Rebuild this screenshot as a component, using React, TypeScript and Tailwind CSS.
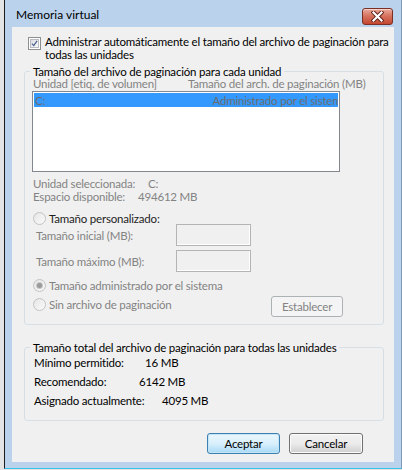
import React from 'react'

const grayText = 'text-[#838383]'

function CloseButton() {
  return (
    <div className="mt-[8px] w-[31px] h-[17px] rounded-[3px] border border-[#7c2f24] bg-gradient-to-b from-[#e9a99a] via-[#d46f5b] to-[#c4452f] flex items-center justify-center shadow-[inset_0_1px_0_rgba(255,255,255,0.5)]">
      <svg width="13" height="11" viewBox="0 0 13 11">
        <path d="M2.5 1.5 L10.5 9.5 M10.5 1.5 L2.5 9.5" stroke="#5a1d14" strokeWidth="4" strokeLinecap="square" />
        <path d="M2.5 1.5 L10.5 9.5 M10.5 1.5 L2.5 9.5" stroke="#ffffff" strokeWidth="2.2" strokeLinecap="square" />
      </svg>
    </div>
  )
}

function Checkbox() {
  return (
    <div className="w-[13px] h-[13px] shrink-0 border border-[#8e8f8f] bg-white p-[1px]">
      <div className="w-full h-full border border-[#b8bcc2] bg-gradient-to-br from-[#dcdde0] to-[#fbfbfb] flex items-center justify-center">
        <svg width="9" height="9" viewBox="0 0 9 9">
          <path d="M1.2 4.6 L3.6 7.2 L7.8 1.2" stroke="#4a5f8e" strokeWidth="1.6" fill="none" />
        </svg>
      </div>
    </div>
  )
}

function Radio({ checked = false }: { checked?: boolean }) {
  return (
    <div className="w-[13px] h-[13px] shrink-0 rounded-full border border-[#c3c3c3] bg-gradient-to-br from-[#e6e6e6] to-[#fafafa] flex items-center justify-center">
      {checked && <div className="w-[5px] h-[5px] rounded-full bg-[#9a9a9a] shadow-[0_0_0_1px_#c8c8c8]" />}
    </div>
  )
}

function DisabledInput() {
  return <div className="w-[75px] h-[22px] shrink-0 border border-[#b4b4b4] bg-[#f0f0f0] shadow-[inset_-1px_-1px_0_#ffffff]" />
}

export default function App() {
  return (
    <div className="w-[402px] h-[470px] bg-[#e4e4e4] flex overflow-hidden font-['Lato','Liberation_Sans',sans-serif] text-[11.5px] tracking-[-0.2px] leading-[13px] text-black">
      <div className="w-[4px] shrink-0" />
      {/* window */}
      <div className="w-[398px] h-[469px] flex flex-col bg-[#bad2ec] border-l border-r border-b border-l-[#1c1c1c] border-r-[#7d99b8] border-b-[#35c3e6]">
        {/* title bar */}
        <div className="h-[27px] shrink-0 flex justify-between pl-[11px] pr-[8px]">
          <span className="pt-[8px] text-[12px] tracking-[0px]">Memoria virtual</span>
          <CloseButton />
        </div>

        {/* client area */}
        <div className="mx-[7px] h-[435px] bg-[#f0f0f0] flex flex-col">
          <div className="mt-[10px] ml-[16px] flex gap-[4px] items-start">
            <Checkbox />
            <span className="-mt-[2px] whitespace-nowrap">
              Administrar automáticamente el tamaño del archivo de paginación para
              <br />
              todas las unidades
            </span>
          </div>

          {/* per drive */}
          <fieldset className="mt-[4px] ml-[12px] w-[360px] h-[260px] border border-[#d5dfe5] rounded-[3px] flex flex-col">
            <legend className="ml-[5px] px-[3px] leading-[13px]">Tamaño del archivo de paginación para cada unidad</legend>
            <div className={`-mt-[1px] pl-[8px] flex whitespace-nowrap ${grayText}`}>
              <span className="w-[155px]">Unidad [etiq. de volumen]</span>
              <span>Tamaño del arch. de paginación (MB)</span>
            </div>
            <div className="mt-[1px] ml-[7px] w-[308px] h-[81px] border border-[#828790] bg-white p-[1px]">
              <div className="h-[14px] bg-[#3399ff] text-[#6d6d6d] flex justify-between items-center overflow-hidden pl-[1px]">
                <span>C:</span>
                <span className="whitespace-nowrap -mr-[9px]">Administrado por el sistema</span>
              </div>
            </div>

            <div className={`mt-[5px] pl-[8px] flex ${grayText}`}>
              <span className="w-[115px]">Unidad seleccionada:</span>
              <span>C:</span>
            </div>
            <div className={`pl-[8px] flex ${grayText}`}>
              <span className="w-[105px]">Espacio disponible:</span>
              <span>494612 MB</span>
            </div>

            <div className="mt-[9px] pl-[8px] flex items-center gap-[3px]">
              <Radio />
              <span className="text-[#1e1e1e]">Tamaño personalizado:</span>
            </div>
            <div className={`-mt-[1px] pl-[11px] flex items-center ${grayText}`}>
              <span className="w-[140px]">Tamaño inicial (MB):</span>
              <DisabledInput />
            </div>
            <div className={`mt-[4px] pl-[11px] flex items-center ${grayText}`}>
              <span className="w-[140px]">Tamaño máximo (MB):</span>
              <DisabledInput />
            </div>

            <div className={`mt-[7px] pl-[8px] flex items-center gap-[3px] ${grayText}`}>
              <Radio checked />
              <span>Tamaño administrado por el sistema</span>
            </div>
            <div className="mt-[4px] flex justify-between items-start">
              <div className={`mt-[2px] pl-[8px] flex items-center gap-[3px] ${grayText}`}>
                <Radio />
                <span>Sin archivo de paginación</span>
              </div>
              <div className={`mr-[40px] w-[72px] h-[21px] rounded-[3px] border border-[#adb2b5] bg-[#f4f4f4] flex items-center justify-center ${grayText}`}>
                Establecer
              </div>
            </div>
          </fieldset>

          {/* totals */}
          <fieldset className="mt-[16px] ml-[12px] w-[360px] h-[80px] border border-[#d5dfe5] rounded-[3px] flex flex-col">
            <legend className="ml-[5px] px-[3px] leading-[13px]">Tamaño total del archivo de paginación para todas las unidades</legend>
            <div className="-mt-[1px] pl-[9px] flex flex-col leading-[19px]">
              <div className="flex">
                <span className="w-[111px]">Mínimo permitido:</span>
                <span>16 MB</span>
              </div>
              <div className="flex">
                <span className="w-[105px]">Recomendado:</span>
                <span>6142 MB</span>
              </div>
              <div className="flex">
                <span className="w-[128px]">Asignado actualmente:</span>
                <span>4095 MB</span>
              </div>
            </div>
          </fieldset>

          <div className="mt-[12px] mr-[31px] flex justify-end gap-[9px]">
            <div className="w-[73px] h-[21px] rounded-[3px] border border-[#3c7fb1] bg-gradient-to-b from-[#eaf6fd] via-[#d9f0fc] to-[#a7d9f5] shadow-[inset_0_0_0_1px_#c4e5f6] flex items-center justify-center">
              Aceptar
            </div>
            <div className="w-[74px] h-[21px] rounded-[3px] border border-[#707070] bg-gradient-to-b from-[#f2f2f2] via-[#ebebeb] to-[#cfcfcf] shadow-[inset_0_0_0_1px_#fcfcfc] flex items-center justify-center">
              Cancelar
            </div>
          </div>
        </div>
      </div>
    </div>
  )
}
